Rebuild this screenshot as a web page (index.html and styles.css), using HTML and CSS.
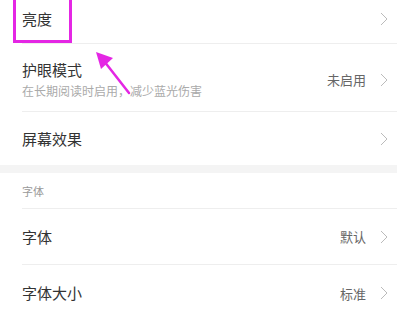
FILE: index.html
```html
<!DOCTYPE html>
<html lang="zh">
<head>
<meta charset="utf-8">
<link rel="stylesheet" href="styles.css">
</head>
<body>
<div class="screen">
  <div class="list">
    <div class="row row-first">
      <span class="title">亮度</span>
      <span class="right"><svg class="chev" viewBox="0 0 8 14" width="8" height="14"><polyline points="1,1 7,7 1,13"/></svg></span>
    </div>
    <div class="row row-two">
      <div class="texts">
        <span class="title">护眼模式</span>
        <span class="sub">在长期阅读时启用，减少蓝光伤害</span>
      </div>
      <span class="right"><span class="value">未启用</span><svg class="chev" viewBox="0 0 8 14" width="8" height="14"><polyline points="1,1 7,7 1,13"/></svg></span>
    </div>
    <div class="row row-short row-last">
      <span class="title">屏幕效果</span>
      <span class="right"><svg class="chev" viewBox="0 0 8 14" width="8" height="14"><polyline points="1,1 7,7 1,13"/></svg></span>
    </div>
  </div>
  <div class="band"></div>
  <div class="list">
    <div class="header">字体</div>
    <div class="row row-mid">
      <span class="title">字体</span>
      <span class="right"><span class="value">默认</span><svg class="chev" viewBox="0 0 8 14" width="8" height="14"><polyline points="1,1 7,7 1,13"/></svg></span>
    </div>
    <div class="row row-mid row-last">
      <span class="title">字体大小</span>
      <span class="right"><span class="value">标准</span><svg class="chev" viewBox="0 0 8 14" width="8" height="14"><polyline points="1,1 7,7 1,13"/></svg></span>
    </div>
  </div>

  <div class="highlight"></div>
  <svg class="arrow" viewBox="0 0 409 311" width="409" height="311">
    <line x1="129" y1="93" x2="104" y2="61" />
    <polygon points="96,52 113,58 101,69" />
  </svg>
</div>
</body>
</html>
```
FILE: styles.css
```css
html, body {
  margin: 0;
  padding: 0;
  background: #ffffff;
}
body {
  font-family: "Noto Sans CJK SC", "Noto Sans", sans-serif;
  width: 409px;
  height: 311px;
  overflow: hidden;
}
.screen {
  position: relative;
  width: 397px;
  height: 311px;
  overflow: hidden;
}
.list {
  padding-left: 22px;
}
.row {
  display: flex;
  align-items: center;
  justify-content: space-between;
  padding-right: 9px;
  border-bottom: 1px solid #eeeeee;
  box-sizing: border-box;
}
.row-first {
  height: 44px;
  padding-bottom: 6px;
}
.row-two {
  height: 68px;
  padding-top: 4px;
}
.row-short {
  height: 53px;
}
.row-mid {
  height: 56px;
}
.row-last {
  border-bottom: none;
}
.title {
  font-size: 15px;
  color: #333333;
  line-height: 20px;
}
.texts {
  display: flex;
  flex-direction: column;
  gap: 3px;
}
.sub {
  font-size: 12px;
  color: #aaaaaa;
  line-height: 16px;
}
.right {
  display: flex;
  align-items: center;
  gap: 14px;
}
.value {
  font-size: 13px;
  color: #666666;
}
.chev {
  display: block;
  fill: none;
  stroke: #bbbbbb;
  stroke-width: 1;
}
.band {
  height: 8px;
  background: #f4f4f4;
}
.header {
  height: 36px;
  display: flex;
  align-items: center;
  font-size: 11px;
  color: #999999;
  border-bottom: 1px solid #eeeeee;
  box-sizing: border-box;
}
.highlight {
  position: absolute;
  left: 13px;
  top: -3px;
  width: 59px;
  height: 46px;
  border: 3px solid #e426e4;
  box-sizing: border-box;
}
.arrow {
  position: absolute;
  left: 0;
  top: 0;
}
.arrow line {
  stroke: #e426e4;
  stroke-width: 2.5;
  stroke-linecap: round;
}
.arrow polygon {
  fill: #e426e4;
}
```
